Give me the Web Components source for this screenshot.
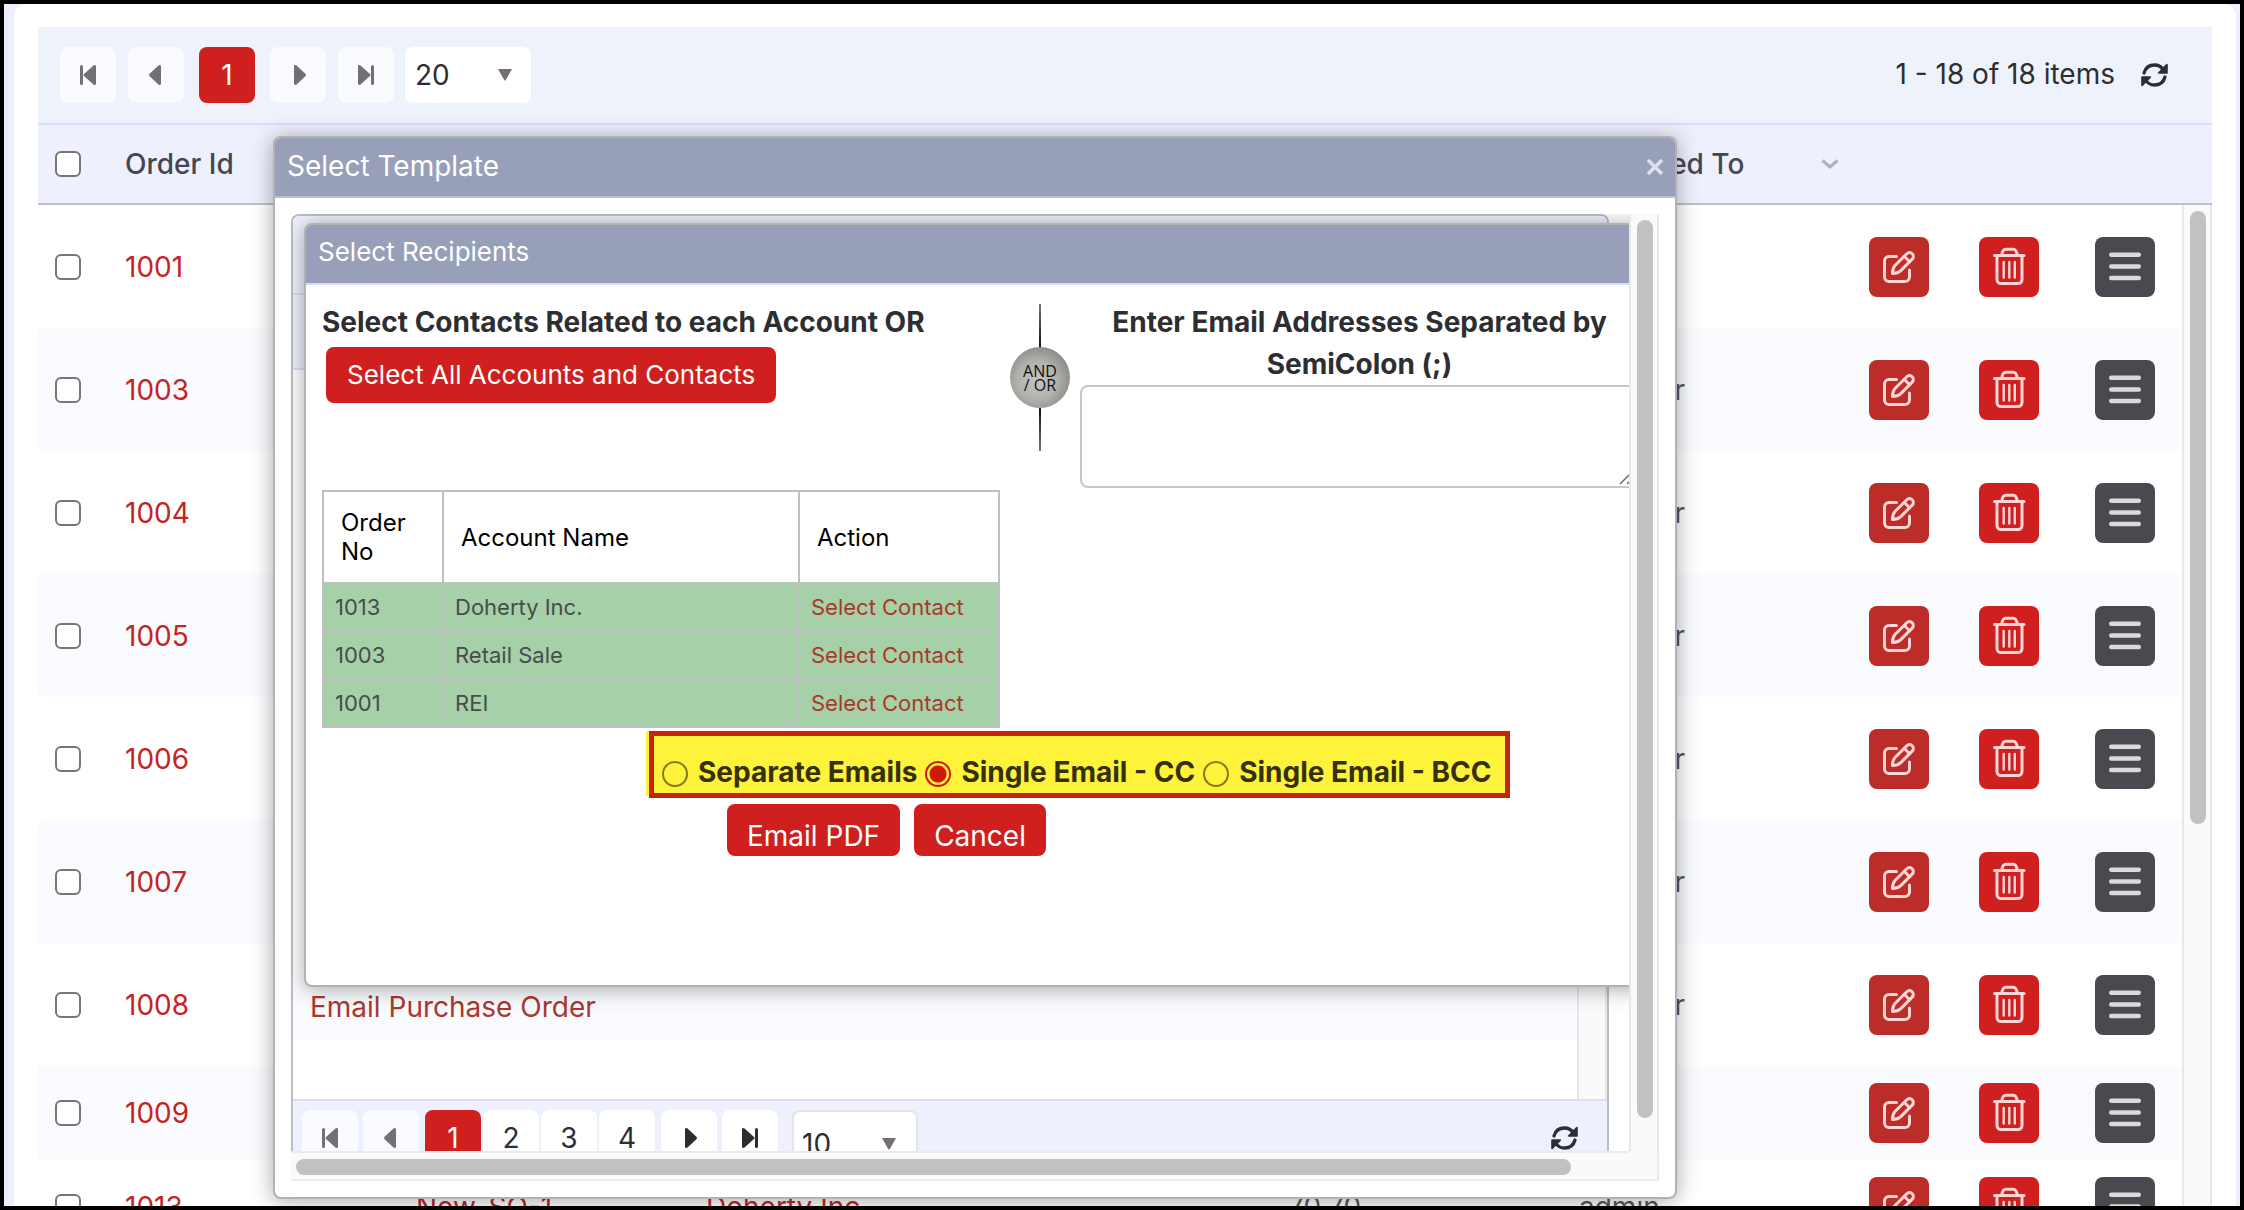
<!DOCTYPE html>
<html lang="en">
<head>
<meta charset="utf-8">
<title>Orders</title>
<style>
html, body { margin: 0; height: 100%; }
body { font-family: Inter, "Liberation Sans", sans-serif; font-size: 28px; color: #2d2e31; background: #000; }
</style>
</head>
<body>
<orders-page></orders-page>
<script>
const define = (name, html, setup) => {
  const template = document.createElement('template');
  template.innerHTML = html;
  customElements.define(name, class extends HTMLElement {
    connectedCallback() {
      if (this.shadowRoot) return;
      const root = this.attachShadow({ mode: 'open' });
      root.append(template.content.cloneNode(true));
      if (setup) setup(root, this);
    }
  });
};

/* ---------- icons ---------- */
const ICONS = {
  first: ['0 0 16 20', '<path d="M1.5 1.5v17" stroke="currentColor" stroke-width="3" stroke-linecap="round"/><path d="M16 1.5v17c0 1.500-1.500 2-2.500 1L4 11q-1-1 0-2L13.500.500c1-1 2.500-.500 2.500 1z" fill="currentColor"/>'],
  prev: ['0 0 12 20', '<path d="M12 1.500v17c0 1.500-1.500 2-2.500 1L.600 11.200q-1-1.200 0-2.400L9.500.500c1-1 2.500-.500 2.500 1z" fill="currentColor"/>'],
  next: ['0 0 12 20', '<path d="M0 1.500v17c0 1.500 1.500 2 2.500 1l8.900-8.300q1-1.200 0-2.400L2.500.500C1.500-.500 0 0 0 1.500z" fill="currentColor"/>'],
  last: ['0 0 16 20', '<path d="M14.500 1.500v17" stroke="currentColor" stroke-width="3" stroke-linecap="round"/><path d="M0 1.500v17c0 1.500 1.500 2 2.500 1L12 11q1-1 0-2L2.500.500C1.500-.500 0 0 0 1.500z" fill="currentColor"/>'],
  refresh: ['0 0 27 24', '<g fill="none" stroke="currentColor" stroke-width="3.300" stroke-linecap="round"><path d="M3 10C4.500 4.500 8.500 2 13.500 2c4 0 7 1.800 9 5"/><path d="M24 14c-1.500 5.500-5.500 8-10.500 8-4 0-7-1.800-9-5"/></g><path d="M26.800 1.800v8q0 1-1 1h-8q-1.800-.200-.600-1.500L25.300 1q1.400-.900 1.500.800zM.200 22.200v-8q0-1 1-1h8q1.800.200.600 1.500L1.700 23q-1.400.900-1.500-.800z" fill="currentColor"/>'],
  edit: ['0 0 60 60', '<g fill="none" stroke="#ffd5d5" stroke-width="3" stroke-linecap="round" stroke-linejoin="round"><path d="M27.500 19.500H20a4.500 4.500 0 0 0-4.500 4.500v16a4.500 4.500 0 0 0 4.500 4.500h16a4.500 4.500 0 0 0 4.500-4.500v-7"/><path d="M23.500 36.500c0-4 .800-6.200 2.500-8L37.800 16.700a3.800 3.800 0 0 1 5.400 5.400L31.500 33.900c-1.800 1.800-4 2.600-8 2.600z"/><path d="M35.200 19.300l5.400 5.400"/></g>'],
  trash: ['0 0 60 60', '<g fill="none" stroke="#ffd5d5" stroke-width="3" stroke-linecap="round" stroke-linejoin="round"><path d="M15.500 18.500h29.500M22.800 18c.500-3.500 1.700-5.700 4-5.700h7.400c2.300 0 3.500 2.200 4 5.700M18 19v23.500a4 4 0 0 0 4 4h17a4 4 0 0 0 4-4V19"/><path d="M24.700 25v15.500M30.300 25v15.500M35.800 25v15.500" stroke-width="2.400"/></g>'],
  menu: ['0 0 60 60', '<path d="M16.200 17.800h27.600M16.200 29.500h27.600M16.200 41h27.600" stroke="#dadade" stroke-width="4.400" stroke-linecap="round"/>'],
  caret: ['0 0 14 12', '<path d="M0 0h14L7.800 11q-.800 1.200-1.600 0z" fill="#786e6c"/>'],
  chevron: ['0 0 18 10', '<path d="M1.500 1.500L9 8l7.500-6.500" fill="none" stroke="#aeb0b8" stroke-width="3"/>'],
  close: ['0 0 18 20', '<path d="M2 3l14 14M16 3L2 17" fill="none" stroke="#dfe2ee" stroke-width="3.600"/>'],
  grip: ['0 0 18 18', '<path d="M2 17L17 2M9 17l8-8" fill="none" stroke="#6b6b6b" stroke-width="1.500"/>']
};
define('ui-icon', '<style>:host{display:inline-flex}svg{display:block}</style><svg aria-hidden="true"></svg>', (root, host) => {
  const [box, body] = ICONS[host.getAttribute('name')];
  const svg = root.querySelector('svg');
  const [, , w, h] = box.split(' ');
  svg.setAttribute('viewBox', box);
  svg.setAttribute('width', w);
  svg.setAttribute('height', h);
  svg.innerHTML = body;
});

/* ---------- form pieces ---------- */
define('red-button', `<style>
:host{display:inline-flex}
button{font:inherit;line-height:40px;color:#fff;background:#cf1f1e;border:0;border-radius:8px;padding:var(--pad,8px 21px);cursor:pointer;white-space:nowrap}
</style><button type="button"><slot></slot></button>`);

define('page-size', `<style>
:host{display:flex;position:relative;width:126px;height:var(--select-height,56px);margin-left:var(--size-margin,0px)}
select{appearance:none;box-sizing:border-box;width:100%;height:100%;font:inherit;color:#2d2e31;background:#fff;border:var(--select-border,0);border-radius:8px;padding:0 var(--select-pad,10px)}
ui-icon{position:absolute;right:var(--caret-right,19px);top:50%;margin-top:-6px;pointer-events:none}
</style><select aria-label="Items per page"><option></option></select><ui-icon name="caret"></ui-icon>`, (root, host) => {
  root.querySelector('option').textContent = host.getAttribute('value');
});

define('pager-bar', `<style>
:host{display:flex;align-items:flex-start;gap:var(--gap,12px)}
.pages{display:flex;gap:2px;margin:0 var(--pages-margin,3px)}
button{font:inherit;box-sizing:border-box;width:56px;height:56px;padding:0;border:0;border-radius:8px;background:#fff;color:#2d2e31;display:flex;align-items:center;justify-content:center}
button:disabled{background:#fafbff;color:#6f7175}
button[aria-current]{background:#cf1f1e;color:#fff}
.prev{padding-right:3px}
.next{padding-left:4px}
.end{flex:1;display:flex;justify-content:flex-end;align-items:center;gap:26px;height:56px}
.end button{width:27px;background:none}
.end slot{display:block;line-height:34px;padding-bottom:2px}
</style>
<button class="back" aria-label="First page"><ui-icon name="first"></ui-icon></button>
<button class="back prev" aria-label="Previous page"><ui-icon name="prev"></ui-icon></button>
<div class="pages"></div>
<button class="fwd next" aria-label="Next page"><ui-icon name="next"></ui-icon></button>
<button class="fwd" aria-label="Last page"><ui-icon name="last"></ui-icon></button>
<div class="end"><slot></slot><button aria-label="Refresh"><ui-icon name="refresh"></ui-icon></button></div>`, (root, host) => {
  const count = Number(host.getAttribute('pages'));
  root.querySelectorAll(count === 1 ? '.back, .fwd' : '.back').forEach(b => { b.disabled = true; });
  const pages = root.querySelector('.pages');
  for (let i = 1; i <= count; i++) {
    const b = document.createElement('button');
    b.textContent = i;
    if (i === 1) b.setAttribute('aria-current', 'page');
    pages.append(b);
  }
  const size = document.createElement('page-size');
  size.setAttribute('value', host.getAttribute('size'));
  root.querySelector('.end').before(size);
});

/* ---------- orders grid ---------- */
const ORDERS = [
  ['1001', '', '', '', ''], ['1003', '', '', '', 'r'], ['1004', '', '', '', 'r'], ['1005', '', '', '', 'r'],
  ['1006', '', '', '', 'r'], ['1007', '', '', '', 'r'], ['1008', '', '', '', 'r'], ['1009', '', '', '', ''],
  ['1013', 'New_SO-1', 'Doherty Inc.', '70.70', 'admin']
];
define('order-grid', `<style>
:host{display:flex;flex-direction:column;min-height:0}
pager-bar{height:76px;padding:20px 44px 0 22px;background:#edf2fb;border-bottom:2px solid #dadff7;--size-margin:-1px}
.body{display:flex;flex:1;min-height:0;overflow:hidden}
table{flex:1;min-width:0;table-layout:fixed;border-collapse:separate;border-spacing:0;align-self:flex-start}
th{height:78px;background:#eef0fd;border-bottom:2px solid #bfc0c6;font-weight:500;color:#44474f;text-align:left;padding:0 11px 0 19px}
td{height:94px;padding:0 0 0 19px;white-space:nowrap;color:#55575c}
tr.tall td{height:123px}
tbody tr:nth-child(even) td{background:#fafbff}
th:first-child,td:first-child{padding-left:17px}
a{color:#c42423;text-decoration:none}
input{appearance:none;display:block;box-sizing:border-box;width:26px;height:26px;margin:0;border:2px solid #767676;border-radius:6px;background:#fff}
.head{display:flex;justify-content:space-between;align-items:center}
.head button{border:0;background:none;padding:0;display:flex}
td button{display:block;border:0;padding:0;border-radius:8px;width:60px;height:60px}
.edit{background:#bc2c28}.trash{background:#cf1f1e}.menu{background:#494a4f}
.tail{display:inline-block;width:106px;text-align:right}
.side{width:30px;display:flex;flex-direction:column}
.corner{height:78px;background:#eef0fd;border-bottom:2px solid #bfc0c6}
.track{flex:1;background:#fafafa;border:solid #e8e8e8;border-width:0 2px;padding:6px 4px 0 6px}
.thumb{height:calc(61% + 6px);width:16px;border-radius:8px;background:#c1c1c1}
</style>
<pager-bar pages="1" size="20"><span>1 - 18 of 18 items</span></pager-bar>
<div class="body">
<table>
<colgroup><col style="width:68px"><col style="width:291px"><col style="width:290px"><col><col style="width:291px"><col style="width:290px"><col style="width:110px"><col style="width:116px"><col style="width:106px"></colgroup>
<thead><tr><th><input type="checkbox" aria-label="Select all orders"></th><th>Order Id</th><th></th><th></th><th></th><th><div class="head"><span>Assigned To</span><button aria-label="Column menu"><ui-icon name="chevron"></ui-icon></button></div></th><th></th><th></th><th></th></tr></thead>
<tbody></tbody>
</table>
<div class="side"><div class="corner"></div><div class="track"><div class="thumb"></div></div></div>
</div>`, root => {
  const link = t => t ? `<a href="#">${t}</a>` : '';
  root.querySelector('tbody').innerHTML = ORDERS.map(([id, subject, account, total, owner], i) => `<tr class="${i < 7 ? 'tall' : ''}">
    <td><input type="checkbox" aria-label="Select order"></td><td>${link(id)}</td><td>${link(subject)}</td><td>${link(account)}</td><td>${total}</td>
    <td>${owner === 'r' ? '<span class="tail">r</span>' : owner}</td>
    <td><button class="edit" aria-label="Edit"><ui-icon name="edit"></ui-icon></button></td>
    <td><button class="trash" aria-label="Delete"><ui-icon name="trash"></ui-icon></button></td>
    <td><button class="menu" aria-label="More"><ui-icon name="menu"></ui-icon></button></td></tr>`).join('');
});

/* ---------- dialogs ---------- */
define('modal-window', `<style>
:host{display:flex;flex-direction:column;box-sizing:border-box;background:#fff;border:2px solid #b1b2b5;border-radius:8px;box-shadow:0 2px 22px rgba(0,0,0,.34)}
header{display:flex;justify-content:space-between;align-items:center;height:58px;padding:0 11px 0 12px;background:#989fb9;color:#fff;border-bottom:2px solid var(--title-line,#bfbfc2);border-radius:6px 6px 0 0;font-size:var(--title-size,28px)}
header span{padding-bottom:var(--title-lift,2px)}
header button{border:0;background:none;padding:0;display:flex}
.content{flex:1;min-height:0;display:flex;flex-direction:column}
</style>
<header><span></span></header><div class="content"><slot></slot></div>`, (root, host) => {
  root.querySelector('span').textContent = host.getAttribute('heading');
  if (host.hasAttribute('closable')) {
    const b = document.createElement('button');
    b.setAttribute('aria-label', 'Close');
    b.innerHTML = '<ui-icon name="close"></ui-icon>';
    root.querySelector('header').append(b);
  }
});

define('scroll-pane', `<style>
:host{display:grid;grid-template:minmax(0,1fr) 30px / minmax(0,1fr) 30px;flex:1;min-height:0}
.view{position:relative;overflow:hidden;display:flex}
.v,.h,.c{background:#fafafa;box-sizing:border-box}
.v{border:solid #e8e8e8;border-width:0 2px;padding:6px 4px 0 6px}
.h{border:solid #ebebeb;border-width:2px 0;padding:6px 5px 4px}
.c{border:solid #ebebeb;border-width:0 2px 2px 0}
.v div{width:16px;height:calc(96% + 4px);border-radius:8px;background:#c1c1c1}
.h div{height:16px;width:96%;border-radius:8px;background:#c1c1c1}
</style><div class="view"><slot></slot></div><div class="v"><div></div></div><div class="h"><div></div></div><div class="c"></div>`);

define('template-grid', `<style>
:host{flex:1;margin-right:20px;display:flex;flex-direction:column;border:2px solid #bdbec2;border-bottom:0;border-radius:8px 8px 0 0;overflow:hidden}
.tools,.head{background:#edf1fc;border-bottom:2px solid #dadff7}
.tools{height:77px}.head{height:73px;background:#eef0fd}
.rows{flex:1;display:flex}
ul{flex:1;margin:0;padding:0;list-style:none;display:flex;flex-direction:column;justify-content:flex-end;padding-bottom:59px}
li{height:66px;display:flex;align-items:center;padding-left:17px;background:#fafbff}
a{color:#aa382e;text-decoration:none}
.track{width:26px;background:#fafafa;border:solid #e6e6e6;border-width:0 2px}
pager-bar{height:41px;padding:9px 29px 0 9px;background:#eef0fd;border-top:2px solid #dadff7;--gap:5px;--pages-margin:1px;--size-margin:9px;--select-height:68px;--select-border:2px solid #e4e4e6;--select-pad:8px;--caret-right:22px}
</style>
<div class="tools"></div><div class="head"></div>
<div class="rows"><ul><li><a href="#">Email Purchase Order</a></li></ul><div class="track"></div></div>
<pager-bar pages="4" size="10"></pager-bar>`);

/* ---------- recipients ---------- */
define('or-divider', `<style>
:host{display:flex;flex-direction:column;align-items:center;width:60px;height:147px}
i{flex:1;width:2px;background:linear-gradient(#777,#111)}
i:last-child{background:linear-gradient(#111,#777)}
div{width:60px;height:61px;border-radius:50%;background:radial-gradient(circle at 45% 55%,#c4c4c0 0,#b2b2ae 40%,#8d8d89 72%,#70706c 100%);color:#111;font:16px/14px "Open Sans",sans-serif;text-align:center;display:flex;flex-direction:column;align-items:center;justify-content:center}
</style><i></i><div><span>AND</span><span>/ OR</span></div><i></i>`);

define('contacts-table', `<style>
:host{display:block;width:678px}
table{width:100%;table-layout:fixed;border-collapse:collapse;font-size:22px;line-height:28px}
th,td{border:2px solid #bfc0c0;text-align:left;box-sizing:border-box}
th{height:92px;padding:0 17px;font-size:24px;line-height:29px;font-weight:400;color:#000}
td{height:48px;padding:0 11px;background:#a6d0a8;color:#464d4a}
a{color:#a8392c;text-decoration:none}
</style>
<table><colgroup><col style="width:120px"><col style="width:356px"><col></colgroup>
<thead><tr><th>Order No</th><th>Account Name</th><th>Action</th></tr></thead><tbody></tbody></table>`, root => {
  root.querySelector('tbody').innerHTML = [['1013', 'Doherty Inc.'], ['1003', 'Retail Sale'], ['1001', 'REI']]
    .map(([no, name]) => `<tr><td>${no}</td><td>${name}</td><td><a href="#">Select Contact</a></td></tr>`).join('');
});

define('send-mode', `<style>
:host{display:flex;box-sizing:border-box;height:67px;background:#fef23b;border:5px solid #c82208;padding:19px 0 0 8px;box-shadow:-3px -2px 0 0 #fef23b;clip-path:inset(0 0 0 -4px);font-weight:700;color:#33300a;white-space:nowrap;width:861px}
label{display:flex;align-items:center;gap:10px;line-height:34px;height:34px;margin-right:8px}
input{appearance:none;box-sizing:border-box;width:26px;height:26px;margin:4px 0 0;border:2px solid #807a1c;border-radius:50%}
input:checked{border-color:#d01a08;background:radial-gradient(circle,#d01a08 0 8px,transparent 9px)}
</style>
<label><input type="radio" name="mode">Separate Emails</label><label><input type="radio" name="mode" checked>Single Email - CC</label><label><input type="radio" name="mode">Single Email - BCC</label>`);

define('recipients-form', `<style>
:host{display:flex;flex-direction:column;padding:0 16px}
.top{display:flex;height:205px}
.left{width:688px;padding-top:16px;line-height:42px;font-weight:700}
.left red-button{display:flex;margin:4px 0 0 4px;font-weight:400;font-size:26px}
or-divider{margin:19px 10px 0 0}
.right{flex:1;display:flex;flex-direction:column;padding-top:16px;text-align:center}
label{line-height:42px;font-weight:700;padding:0 20px}
.box{position:relative;display:flex}
.box ui-icon{position:absolute;right:3px;bottom:3px;pointer-events:none}
textarea{box-sizing:border-box;width:100%;height:103px;border:2px solid #c6c6c8;border-radius:8px;margin:0;background:#fff;resize:none}
send-mode{margin:3px 0 0 327px}
.actions{display:flex;gap:14px;margin:6px 0 0 405px;--pad:12px 20px 0}
</style>
<div class="top">
<div class="left">Select Contacts Related to each Account OR<red-button>Select All Accounts and Contacts</red-button></div>
<or-divider></or-divider>
<div class="right"><label for="mails">Enter Email Addresses Separated by SemiColon (;)</label><div class="box"><textarea id="mails"></textarea><ui-icon name="grip"></ui-icon></div></div>
</div>
<contacts-table></contacts-table>
<send-mode></send-mode>
<div class="actions"><red-button>Email PDF</red-button><red-button>Cancel</red-button></div>`);

/* ---------- page ---------- */
define('orders-page', `<style>
:host{display:flex;box-sizing:border-box;height:100vh;border:4px solid #000;background:#eef0fd;padding:0 4px 0 10px;position:relative;overflow:hidden}
main{flex:1;min-width:0;display:flex;flex-direction:column;background:#fff;border-radius:12px 12px 0 0;padding:23px 24px 0}
order-grid{flex:1}
.outer{position:absolute;left:269px;right:563px;top:132px;bottom:7px}
scroll-pane{margin:16px}
.inner{position:absolute;left:13px;right:-28px;top:9px;height:764px;--title-line:#dadff7;--title-size:26px;--title-lift:5px}
</style>
<main><order-grid></order-grid></main>
<modal-window class="outer" heading="Select Template" closable>
<scroll-pane><template-grid></template-grid>
<modal-window class="inner" heading="Select Recipients"><recipients-form></recipients-form></modal-window>
</scroll-pane>
</modal-window>`);
</script>
</body>
</html>
